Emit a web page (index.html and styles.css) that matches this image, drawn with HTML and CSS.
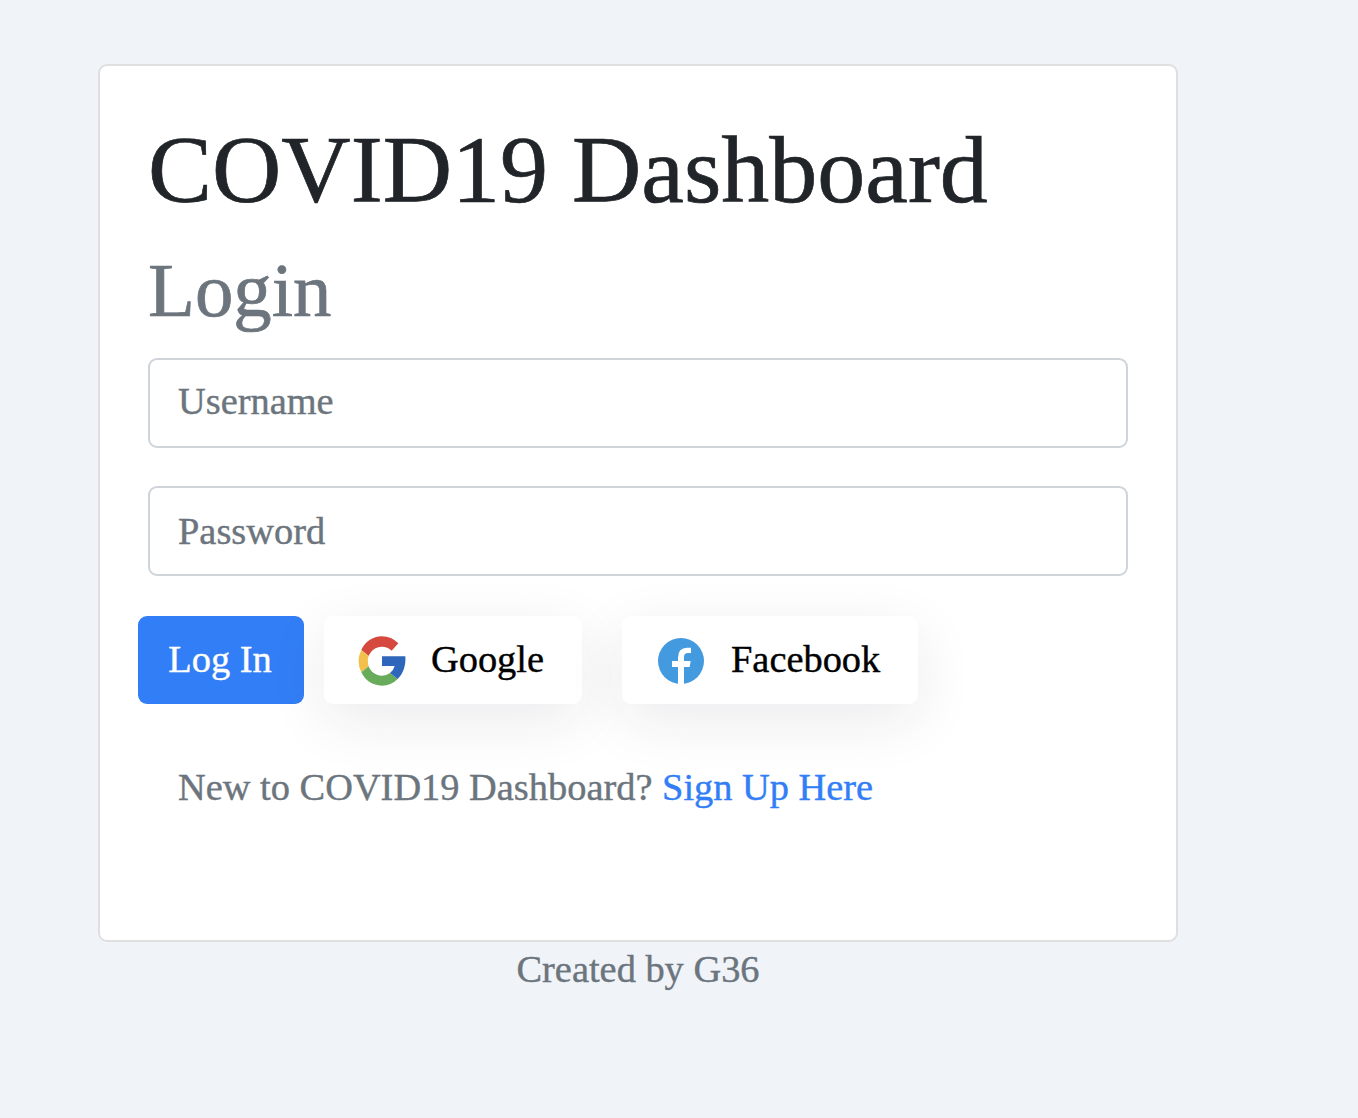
FILE: index.html
```html
<!DOCTYPE html>
<html lang="en">
<head>
<meta charset="utf-8">
<title>COVID19 Dashboard</title>
<link rel="stylesheet" href="styles.css">
</head>
<body>
<main class="card">
  <h1 class="title">COVID19 Dashboard</h1>
  <h2 class="subtitle">Login</h2>
  <form class="form">
    <input class="field username" type="text" placeholder="Username">
    <input class="field password" type="password" placeholder="Password">
    <div class="actions">
      <button class="btn login" type="button">Log In</button>
      <button class="btn social google" type="button">
        <svg class="google-icon" viewBox="54 47 144 150"><path fill="#d5493e" d="M64 89C75 64 98 48 126 48Q154 48 175 69L155 91Q143 79 126 79C107 79 92 91 86 107Z"/><path fill="#f3c04e" d="M64 89L86 107Q81 122 86 138L64 156Q47 122 64 89Z"/><path fill="#68ac5b" d="M64 156L86 138C92 155 107 166 126 166Q139 166 150 158L173 176Q153 196 126 196C98 196 75 180 64 156Z"/><path fill="#2e66bb" d="M126 108H196C198 136 190 160 173 176L150 158Q161 149 164 137H126Z"/></svg>
        <span>Google</span>
      </button>
      <button class="btn social facebook" type="button">
        <svg class="facebook-icon" viewBox="54 53 138 138"><circle fill="#439adf" cx="123" cy="122" r="69"/><path fill="#fff" d="M114 192V140H96V122H114V112Q114 82 141 82H153V98H144Q132 98 132 110V122H152L149 140H132V192Z"/></svg>
        <span>Facebook</span>
      </button>
    </div>
    <p class="signup">New to COVID19 Dashboard? <a class="link" href="#">Sign Up Here</a></p>
  </form>
</main>
<footer class="credit">Created by G36</footer>
</body>
</html>
```
FILE: styles.css
```css
* { box-sizing: border-box; }
body { margin: 0; padding: 64px 0 0 98px; background: #f0f4f9; font-family: "Liberation Serif", "Times New Roman", serif; font-size: 38.4px; color: #212529; -webkit-text-stroke: .4px; }
.card { width: 1080px; height: 878px; padding: 48px; background: #fff; border: 2px solid #dfdfdf; border-radius: 9px; }
.title, .subtitle { margin: 0; font-weight: 400; -webkit-text-stroke: .7px; }
.title { height: 114px; font-size: 96px; line-height: 112px; }
.subtitle { height: 130px; font-size: 76.8px; line-height: 126px; color: #6c757d; }
.form { display: flex; flex-direction: column; }
.field { width: 100%; height: 90px; margin: 0 0 38px; padding: 0 28px; border: 2px solid #ced4da; border-radius: 9px; background: #fff; font: inherit; -webkit-text-stroke: .4px; }
.username { padding-bottom: 4px; }
.field::placeholder { color: #6c757d; opacity: 1; }
.actions { display: flex; margin: 2px 0 0 -10px; }
.btn { display: flex; align-items: center; height: 88px; padding: 0 0 2px; border: 0; border-radius: 9px; font: inherit; white-space: nowrap; -webkit-text-stroke: .4px; }
.login { justify-content: center; width: 166px; padding-right: 2px; background: #327ef6; color: #fff; }
.social { background: #fff; color: #000; box-shadow: 0 16px 60px rgba(33, 37, 60, .09); }
.google { width: 258px; margin-left: 20px; padding-left: 34px; }
.facebook { width: 296px; margin-left: 40px; padding-left: 36px; }
.google-icon { width: 48px; height: 50px; margin: 4px 25px 0 0; }
.facebook-icon { width: 46px; height: 46px; margin: 4px 27px 0 0; }
.signup { margin: 61px 0 0 30px; line-height: 44px; color: #6c757d; }
.link { color: #327ef6; text-decoration: none; }
.credit { width: 1080px; margin-top: 5px; line-height: 44px; text-align: center; color: #6c757d; }
```
